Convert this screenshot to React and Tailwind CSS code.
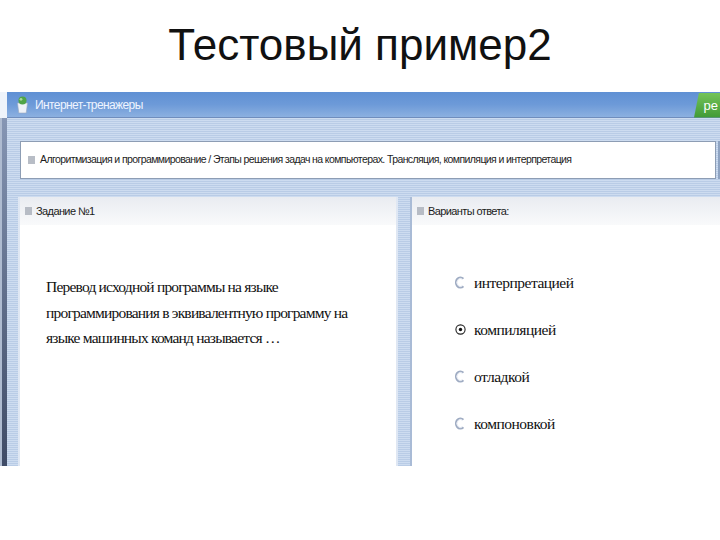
const stripes =
  'bg-[repeating-linear-gradient(180deg,#cddcf0_0px,#cddcf0_1px,#b9cce6_1px,#b9cce6_2px)]';

function OpenRadio() {
  return (
    <svg width="11" height="13" viewBox="0 0 11 13" className="shrink-0">
      <path d="M8.5 2.6 A4.6 5.2 0 1 0 8.5 10.4" fill="none" stroke="#9eabc2" strokeWidth="1.8" />
      <path d="M7.6 3.4 A3.4 4 0 1 0 7.6 9.6" fill="none" stroke="#dfe5ef" strokeWidth="0.8" />
    </svg>
  );
}

function CheckedRadio() {
  return (
    <svg width="11" height="11" viewBox="0 0 11 11" className="shrink-0">
      <circle cx="5.5" cy="5.5" r="4.6" fill="#fff" stroke="#222" strokeWidth="1.1" />
      <circle cx="5.5" cy="5.5" r="1.7" fill="#111" />
    </svg>
  );
}

function PanelHeader({ children }) {
  return (
    <div className="h-[28px] flex items-center gap-[4px] pl-[5px] bg-gradient-to-b from-[#e9ecf1] to-[#f9fafb] text-[11px] tracking-[-0.6px] text-[#1b1b1b]">
      <span className="w-[7px] h-[8px] bg-[#b7bcc5]" />
      {children}
    </div>
  );
}

const options = [
  { label: 'интерпретацией', checked: false },
  { label: 'компиляцией', checked: true },
  { label: 'отладкой', checked: false },
  { label: 'компоновкой', checked: false },
];

export default function App() {
  return (
    <div className="w-[720px] h-[540px] bg-white overflow-hidden font-['Liberation_Sans',Arial,sans-serif]">
      {/* slide title */}
      <div className="h-[92px] pt-[23px]">
        <h1 className="text-center text-[44px] leading-[44px] text-[#111]">Тестовый пример2</h1>
      </div>

      {/* embedded screenshot */}
      <div className="flex h-[374px]">
        <div className="w-[7px] flex flex-col">
          <div className="h-[26px] bg-[#eef3fa]" />
          <div className="flex-1 flex">
            <div className="w-[2px] bg-[#aebbd0]" />
            <div className="flex-1 bg-gradient-to-b from-[#8696b4] to-[#3f4b66]" />
          </div>
        </div>

        <div className="flex-1 flex flex-col">
          {/* top bar */}
          <div className="h-[26px] flex items-center bg-gradient-to-b from-[#5f90d4] via-[#6d9ad8] to-[#8cb0e0] border-b border-[#6f8dbd]">
            <svg width="13" height="20" viewBox="0 0 13 20" className="ml-[9px]">
              <path d="M1.5 8 h10 l-1.3 10 h-7.4 z" fill="#eef2f8" stroke="#9aa9c0" strokeWidth="0.6" />
              <circle cx="6.5" cy="5.5" r="4" fill="#4fa447" />
              <circle cx="5" cy="4.3" r="1.4" fill="#a8d89a" />
            </svg>
            <span className="ml-[6px] text-[12px] tracking-[-0.6px] text-[#eef4ff]">Интернет-тренажеры</span>
            <div className="ml-auto h-[25px] w-[26px] mt-[1px] flex items-center justify-end pr-[2px] bg-gradient-to-b from-[#74c35a] to-[#3f9a35] [clip-path:polygon(5px_0,100%_0,100%_100%,0_100%)]">
              <span className="text-[13px] text-white leading-none">ре</span>
            </div>
          </div>

          {/* striped workspace */}
          <div className={`flex-1 ${stripes} flex flex-col`}>
            <div className="h-[23px]" />
            <div className="flex h-[38px]">
              <div className="w-[13px]" />
              <div className="flex-1 bg-white border border-[#8d9db4] flex items-center gap-[5px] pl-[7px] text-[10.5px] tracking-[-0.6px] text-[#1d1d1d] whitespace-nowrap">
                <span className="w-[7px] h-[8px] bg-[#b8bdc6]" />
                Алгоритмизация и программирование / Этапы решения задач на компьютерах. Трансляция, компиляция и интерпретация
              </div>
              <div className="w-[2px]" />
              <div className="w-[2px] bg-[#8ea3c2]" />
            </div>
            <div className="h-[18px]" />

            <div className="flex-1 flex">
              <div className="w-[13px] border-r-2 border-[#dfe7f3]" />
              <div className="w-[376px] flex flex-col bg-white">
                <PanelHeader>Задание №1</PanelHeader>
                <div className="flex-1 pt-[49px] pl-[26px] font-['Liberation_Serif','Times_New_Roman',serif] text-[15.5px] leading-[25.5px] tracking-[-0.8px] text-[#111] whitespace-nowrap">
                  Перевод исходной программы на языке
                  <br />
                  программирования в эквивалентную программу на
                  <br />
                  языке машинных команд называется …
                </div>
              </div>
              <div className="w-[16px] border-l-2 border-r-2 border-l-[#dfe7f3] border-r-[#a9bbd6]" />
              <div className="flex-1 flex flex-col bg-white">
                <PanelHeader>Варианты ответа:</PanelHeader>
                <div className="pt-[34px] pl-[43px] font-['Liberation_Serif','Times_New_Roman',serif] text-[15.5px] text-[#111]">
                  {options.map((o) => (
                    <div key={o.label} className="h-[47px] flex items-center gap-[8px]">
                      {o.checked ? <CheckedRadio /> : <OpenRadio />}
                      <span className="tracking-[-0.5px]">{o.label}</span>
                    </div>
                  ))}
                </div>
              </div>
            </div>
          </div>
        </div>
      </div>
    </div>
  );
}
